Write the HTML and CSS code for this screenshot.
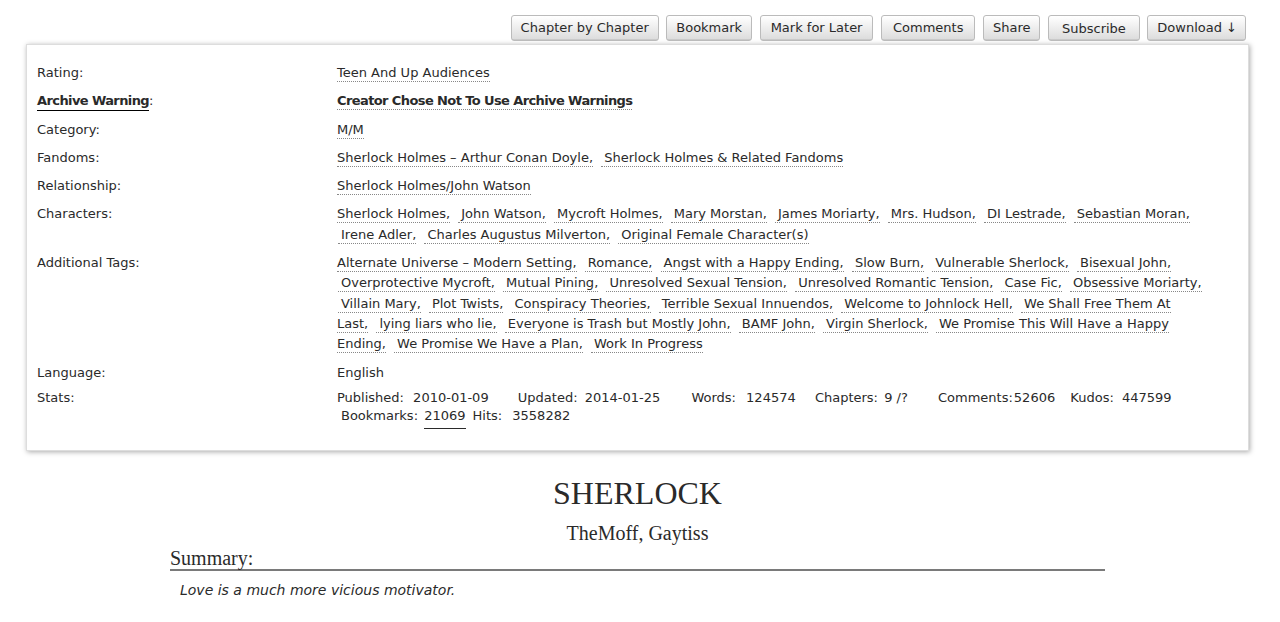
FILE: index.html
```html
<!DOCTYPE html>
<html>
<head>
  <meta charset="utf-8">
  <title>SHERLOCK - TheMoff, Gaytiss</title>
  <link rel="stylesheet" href="styles.css">
</head>
<body>
<ul class="work-nav">
  <li><a href="#">Chapter by Chapter</a></li>
  <li><a href="#">Bookmark</a></li>
  <li><a href="#" class="mark">Mark for Later</a></li>
  <li><a href="#" class="comments">Comments</a></li>
  <li><a href="#">Share</a></li>
  <li><a href="#" class="subscribe">Subscribe</a></li>
  <li><a href="#" class="download">Download ↓</a></li>
</ul>

<div class="wrapper">
  <dl class="meta">
    <dt>Rating:</dt>
    <dd><ul class="tags"><li>Teen And Up Audiences</li></ul></dd>

    <dt><span class="help">Archive Warning</span>:</dt>
    <dd><ul class="tags bold"><li>Creator Chose Not To Use Archive Warnings</li></ul></dd>

    <dt>Category:</dt>
    <dd><ul class="tags"><li>M/M</li></ul></dd>

    <dt>Fandoms:</dt>
    <dd><ul class="tags commas">
      <li>Sherlock Holmes – Arthur Conan Doyle</li>
      <li class="last">Sherlock Holmes &amp; Related Fandoms</li>
    </ul></dd>

    <dt>Relationship:</dt>
    <dd><ul class="tags"><li>Sherlock Holmes/John Watson</li></ul></dd>

    <dt>Characters:</dt>
    <dd><ul class="tags commas">
      <li>Sherlock Holmes</li>
      <li>John Watson</li>
      <li>Mycroft Holmes</li>
      <li>Mary Morstan</li>
      <li>James Moriarty</li>
      <li>Mrs. Hudson</li>
      <li>DI Lestrade</li>
      <li>Sebastian Moran</li>
      <li>Irene Adler</li>
      <li>Charles Augustus Milverton</li>
      <li class="last">Original Female Character(s)</li>
    </ul></dd>

    <dt>Additional Tags:</dt>
    <dd><ul class="tags commas">
      <li>Alternate Universe – Modern Setting</li>
      <li>Romance</li>
      <li>Angst with a Happy Ending</li>
      <li>Slow Burn</li>
      <li>Vulnerable Sherlock</li>
      <li>Bisexual John</li>
      <li>Overprotective Mycroft</li>
      <li>Mutual Pining</li>
      <li>Unresolved Sexual Tension</li>
      <li>Unresolved Romantic Tension</li>
      <li>Case Fic</li>
      <li>Obsessive Moriarty</li>
      <li>Villain Mary</li>
      <li>Plot Twists</li>
      <li>Conspiracy Theories</li>
      <li>Terrible Sexual Innuendos</li>
      <li>Welcome to Johnlock Hell</li>
      <li>We Shall Free Them At Last</li>
      <li>lying liars who lie</li>
      <li>Everyone is Trash but Mostly John</li>
      <li>BAMF John</li>
      <li>Virgin Sherlock</li>
      <li>We Promise This Will Have a Happy Ending</li>
      <li>We Promise We Have a Plan</li>
      <li class="last">Work In Progress</li>
    </ul></dd>

    <dt>Language:</dt>
    <dd>English</dd>

    <dt class="stats-row">Stats:</dt>
    <dd class="stats-row">
      <dl class="stats">
        <dt class="first">Published:</dt> <dd class="published">2010-01-09</dd>
        <dt>Updated:</dt> <dd class="updated">2014-01-25</dd>
        <dt>Words:</dt> <dd class="words">124574</dd>
        <dt>Chapters:</dt> <dd class="chapters">9 /?</dd>
        <dt class="wide">Comments:</dt><dd class="comments">52606</dd>
        <dt>Kudos:</dt> <dd class="kudos">447599</dd>
        <dt>Bookmarks:</dt> <dd class="bookmarks"><a href="#">21069</a></dd><dt class="tight">Hits:</dt> <dd class="hits">3558282</dd>
      </dl>
    </dd>
  </dl>
</div>

<div class="preface">
  <h2 class="title">SHERLOCK</h2>
  <h3 class="byline">TheMoff, Gaytiss</h3>
  <div class="summary">
    <h3 class="heading">Summary:</h3>
    <blockquote>Love is a much more vicious motivator.</blockquote>
  </div>
</div>
</body>
</html>
```

FILE: styles.css
```css
body{
  margin: 0;
  font-family: "DejaVu Sans", Verdana, sans-serif;
  font-size: 13px;
  color: #2a2a2a;
  background: #fff;
}

/* buttons over the meta box */
.work-nav{
  list-style: none;
  margin: 0;
  padding: 15px 34px 0 0;
  display: flex;
  justify-content: flex-end;
  gap: 7.5px;
}
.work-nav a{
  display: block;
  box-sizing: border-box;
  height: 26px;
  line-height: 24px;
  padding: 0 9px;
  border: 1px solid #bbb;
  border-radius: 3px;
  background: linear-gradient(#fff 2%, #ddd 95%, #bbb 100%);
  color: #2a2a2a;
  text-decoration: none;
  white-space: nowrap;
}
.work-nav .mark{
  padding: 0 10px;
}
.work-nav .comments{
  padding: 0 11px;
}
.work-nav .subscribe{
  line-height: 26px;
  padding: 0 13px;
}
.work-nav .download{
  padding: 0 8px 0 9px;
}

/* meta box */
.wrapper{
  margin: 3px 31px 0 26px;
  border: 1px solid #ddd;
  box-shadow: 1px 1px 5px #aaa;
  padding: 18px 44px 25px 10px;
}
dl.meta{
  display: grid;
  grid-template-columns: 300px 1fr;
  row-gap: 8px;
  margin: 0;
  line-height: 20.3px;
}
dl.meta > dt,
dl.meta > dd{
  margin: 0;
}
.help{
  font-weight: bold;
  letter-spacing: -0.6px;
  border-bottom: 1px solid #000;
  padding-bottom: 2px;
}

.tags{
  list-style: none;
  margin: 0;
  padding: 0;
  word-spacing: 3px;
}
.tags li{
  display: inline;
  word-spacing: normal;
  border-bottom: 1px dotted #888;
  padding-bottom: 1px;
}
.tags li + li{
  margin-left: 1px;
  padding-left: 3px;
}
.commas li:after{
  content: ",";
}
.commas li.last:after{
  content: "";
}
.tags.bold{
  font-weight: bold;
  letter-spacing: -0.6px;
}

/* stats */
dl.meta > .stats-row{
  margin-top: -2px;
  line-height: 18px;
}
dl.stats{
  margin: 0;
}
dl.stats dt,
dl.stats dd{
  display: inline;
  margin: 0;
}
dl.stats dt{
  margin-left: 4px;
}
dl.stats dt.first,
dl.stats dt.tight{
  margin-left: 0;
}
dl.stats dd{
  margin-left: 2px;
  margin-right: 16px;
}
dl.stats .published{ margin-left: 5px; margin-right: 21px; }
dl.stats .updated{ margin-left: 3px; margin-right: 23px; }
dl.stats .words{ margin-left: 6px; margin-right: 11px; }
dl.stats .chapters{ margin-right: 22px; }
dl.stats .comments{ margin-left: 1px; margin-right: 7px; }
dl.stats .kudos{ margin-left: 4px; }
dl.stats .bookmarks{ margin-right: 7px; }
dl.stats .hits{ margin-left: 6px; }
dl.stats dd a{
  color: #2a2a2a;
  text-decoration: none;
  border-bottom: 1px solid #2a2a2a;
  padding-bottom: 5px;
}

/* title + summary */
.preface{
  margin: 23px 175px 0 170px;
}
.preface .title{
  font-family: "Liberation Serif", "Times New Roman", serif;
  font-weight: normal;
  font-size: 32px;
  line-height: 38px;
  text-align: center;
  margin: 0;
}
.preface .byline{
  font-family: "Liberation Serif", "Times New Roman", serif;
  font-weight: normal;
  font-size: 20px;
  line-height: 24px;
  text-align: center;
  margin: 9px 0 0;
}
.summary .heading{
  font-family: "Liberation Serif", "Times New Roman", serif;
  font-weight: normal;
  font-size: 20px;
  line-height: 22px;
  margin: 2px 0 0;
  border-bottom: 2px solid #7a7a7a;
}
.summary blockquote{
  margin: 10px 0 0 10px;
  font-size: 14px;
  font-style: italic;
  line-height: 18px;
}
```
